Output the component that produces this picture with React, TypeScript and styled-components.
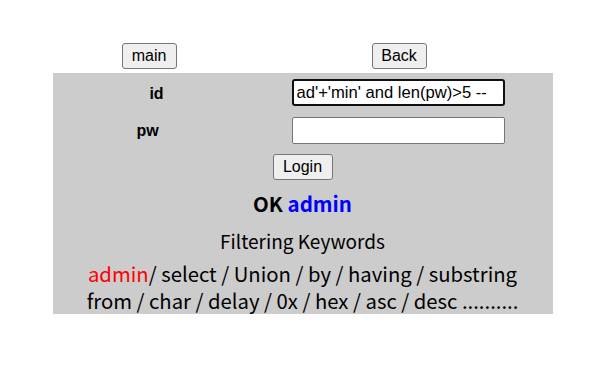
import React from "react";
import styled, { createGlobalStyle } from "styled-components";

const GlobalStyles = createGlobalStyle`
body {
    margin: 8px;
    background: #fff;
    font-family: "Liberation Sans", Arial, sans-serif;
}
`;

const Page = styled.div`
    width: 500px;
    margin: 0 auto;
    padding-top: 35px;
`;

const TopBar = styled.div`
    display: flex;
    padding-left: 69px;
    gap: 195px;
    height: 30px;
`;

const Button = styled.button<{ $w: number; $h: number }>`
    width: ${(p) => p.$w}px;
    height: ${(p) => p.$h}px;
    padding: 0;
    font-family: "Liberation Sans", Arial, sans-serif;
    font-size: 16px;
    color: #000;
    background: #efefef;
    border: 1px solid #767676;
    border-radius: 3px;
`;

const Panel = styled.div`
    background: #cccccc;
    height: 241px;
    padding-top: 6px;
    box-sizing: border-box;
    display: flex;
    flex-direction: column;
    align-items: center;
    overflow: hidden;
`;

const Field = styled.div<{ $gap: number }>`
    display: grid;
    grid-template-columns: 208px 31px 213px;
    align-items: center;
    width: 500px;
    margin-bottom: ${(p) => p.$gap}px;
`;

const Label = styled.label<{ $shift: number; $drop: number }>`
    grid-column: 1;
    text-align: center;
    font-weight: bold;
    font-size: 16px;
    padding-right: ${(p) => p.$shift}px;
    padding-top: ${(p) => p.$drop}px;
`;

const Input = styled.input<{ $focused?: boolean }>`
    grid-column: 3;
    width: 213px;
    height: 27px;
    box-sizing: border-box;
    padding: 0 0 0 3px;
    font-family: "Liberation Sans", Arial, sans-serif;
    font-size: 16.6px;
    color: #000;
    background: #fff;
    border: ${(p) => (p.$focused ? "2px solid #101010" : "1px solid #767676")};
    border-radius: ${(p) => (p.$focused ? "3px" : "2px")};
    outline: none;
`;

const Status = styled.div`
    margin-top: 9px;
    font-family: "Noto Sans CJK KR", sans-serif;
    font-weight: bold;
    font-size: 20.5px;
    line-height: 28px;
    color: #000;
`;

const Blue = styled.span`
    color: #0000ff;
`;

const Title = styled.div`
    margin-top: 11px;
    font-family: "Noto Sans CJK KR", sans-serif;
    font-size: 19px;
    line-height: 26px;
`;

const Keywords = styled.div`
    margin-top: 6px;
    text-align: center;
`;

const KeywordLine = styled.div`
    font-family: "Noto Sans CJK KR", sans-serif;
    font-size: 20.3px;
    line-height: 27px;
    height: 27px;
`;

const Red = styled.span`
    color: #ff0000;
`;

export default function App() {
    return (
        <>
            <GlobalStyles />
            <Page>
                <TopBar>
                    <Button $w={55} $h={26}>main</Button>
                    <Button $w={55} $h={26}>Back</Button>
                </TopBar>
                <Panel>
                    <Field $gap={11}>
                        <Label $shift={0} $drop={3}>id</Label>
                        <Input $focused defaultValue="ad'+'min' and len(pw)>5 --" />
                    </Field>
                    <Field $gap={10}>
                        <Label $shift={18} $drop={0}>pw</Label>
                        <Input type="password" />
                    </Field>
                    <Button $w={60} $h={27}>Login</Button>
                    <Status>
                        OK <Blue>admin</Blue>
                    </Status>
                    <Title>Filtering Keywords</Title>
                    <Keywords>
                        <KeywordLine>
                            <Red>admin</Red>/ select / Union / by / having / substring
                        </KeywordLine>
                        <KeywordLine>from / char / delay / 0x / hex / asc / desc ..........</KeywordLine>
                    </Keywords>
                </Panel>
            </Page>
        </>
    );
}
